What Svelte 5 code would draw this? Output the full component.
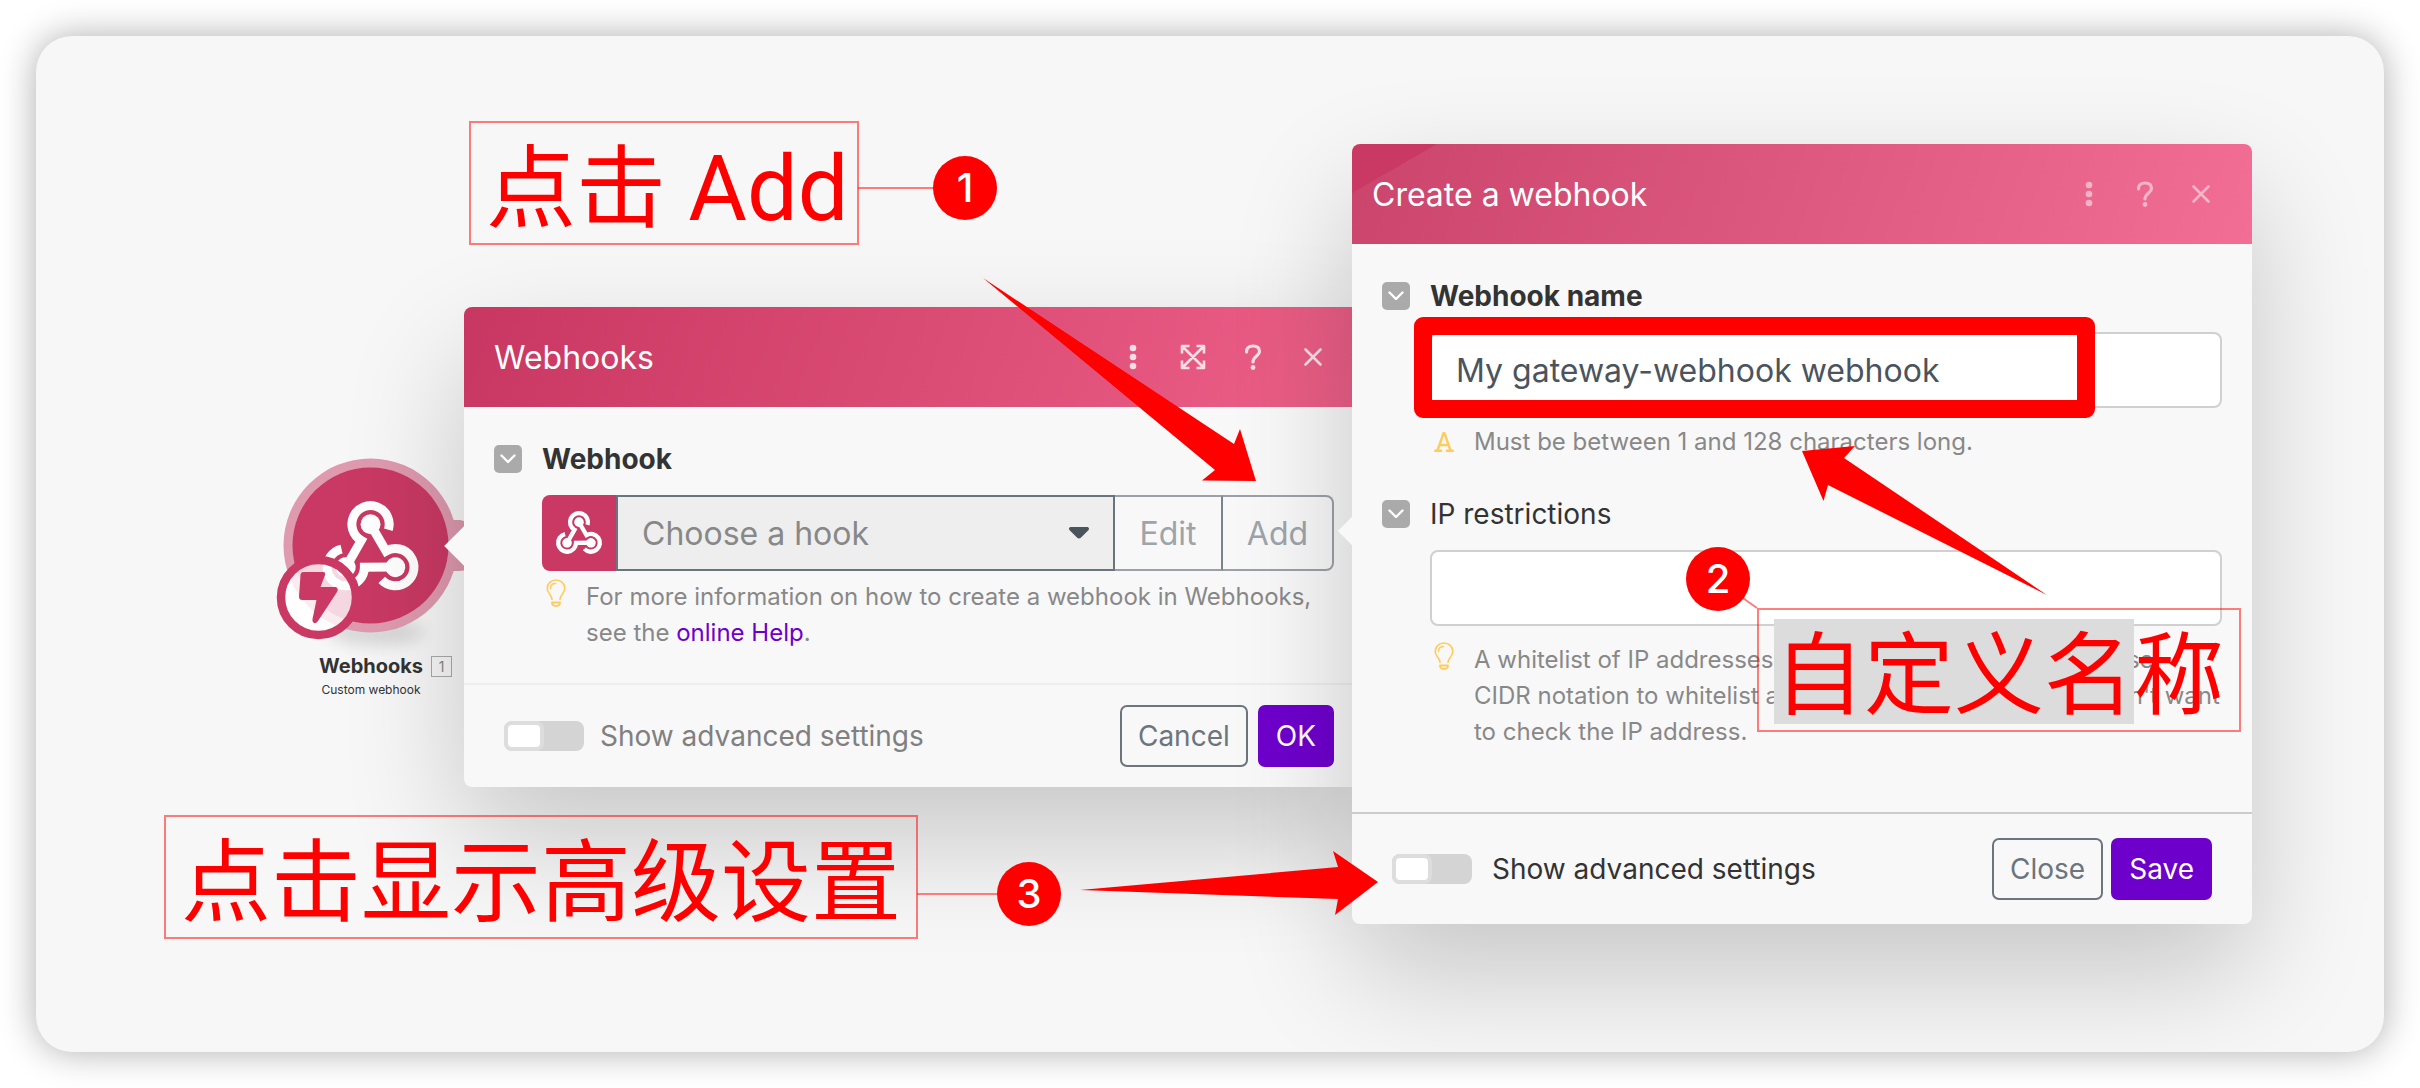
<script lang="ts">
  let hook = $state('');
  let name = $state('My gateway-webhook webhook');
  let ip = $state('');
  let advancedHook = $state(false);
  let advancedCreate = $state(false);
</script>

{#snippet webhookIcon()}
  <svg class="webhook-icon" viewBox="212 207 300 282" aria-hidden="true">
    {#each [0, 120, 240] as turn (turn)}
      <g transform="rotate({turn} 362 369)">
        <path d="M415.5 299.4A56 56 0 1 0 334 331.5L288 412" />
        <circle cx="362" cy="283" r="30" />
      </g>
    {/each}
  </svg>
{/snippet}

{#snippet dots()}
  <svg width="8" height="26" viewBox="0 0 8 26" fill="currentColor" aria-hidden="true">
    <circle cx="4" cy="4" r="3.3" />
    <circle cx="4" cy="13" r="3.3" />
    <circle cx="4" cy="22" r="3.3" />
  </svg>
{/snippet}

{#snippet question()}
  <svg width="18" height="26" viewBox="0 0 18 26" fill="none" aria-hidden="true">
    <path
      d="M2.5 8C2.5 4 5 2 9 2s6.500 2 6.500 5.500C15.500 12 9 12 9 18"
      stroke="currentColor"
      stroke-width="3.2"
      stroke-linecap="round"
    />
    <circle cx="9" cy="23.500" r="2.400" fill="currentColor" />
  </svg>
{/snippet}

{#snippet cross()}
  <svg width="20" height="20" viewBox="0 0 20 20" aria-hidden="true">
    <path d="M2.500 2.500l15 15M17.500 2.500l-15 15" stroke="currentColor" stroke-width="2.600" stroke-linecap="round" />
  </svg>
{/snippet}

{#snippet chevron()}
  <button class="fold" aria-label="Toggle">
    <svg width="16" height="10" viewBox="0 0 16 10" fill="none" aria-hidden="true">
      <path d="M1.500 1.500L8 8l6.500-6.500" stroke="#fff" stroke-width="2.400" stroke-linecap="round" stroke-linejoin="round" />
    </svg>
  </button>
{/snippet}

{#snippet bulb()}
  <svg class="hint-icon" width="20" height="28" viewBox="0 0 20 28" fill="none" stroke="#ffcc5c" aria-hidden="true">
    <path
      d="M6 20.500C6 16 1.200 14.500 1.200 9.500 1.200 4.500 5 1 10 1s8.800 3.500 8.800 8.500c0 5-4.800 6.500-4.800 11"
      stroke-width="1.600"
      stroke-linecap="round"
    />
    <path d="M4.500 9.500C4.500 6.500 6.500 4.400 9.500 4.400" stroke-width="1.500" stroke-linecap="round" />
    <path d="M6 23.500h8c0 2.500-1.500 3.500-4 3.500s-4-1-4-3.500z" stroke-width="1.800" stroke-linejoin="round" />
  </svg>
{/snippet}

<main class="board">
  <section class="node">
    <div class="node-icon">
      <svg width="200" height="190" viewBox="270 450 200 190" aria-hidden="true">
        <ellipse cx="376" cy="632" rx="48" ry="14" fill="#000" opacity="0.120" class="soft" />
        <path d="M448 520h10c5 0 12 2 12 7v38c0 5-7 6-12 6h-10z" fill="#dc98ad" />
        <circle cx="370.500" cy="545.500" r="87" fill="#df9aaf" />
        <circle cx="370.500" cy="545.500" r="78" fill="#c93963" />
        <g class="webhook-icon" transform="translate(250 430) scale(0.333)">
          {#each [0, 120, 240] as turn (turn)}
            <g transform="rotate({turn} 362 369)">
              <path d="M415.500 299.400A56 56 0 1 0 334 331.500L288 412" />
              <circle cx="362" cy="283" r="30" />
            </g>
          {/each}
        </g>
        <circle cx="318.500" cy="597.500" r="37.500" fill="#fff" fill-opacity="0.800" stroke="#c93963" stroke-width="8.500" />
        <path
          d="M304 572h19c2 0 2.500 1 2 3l-4.500 12h14c3 0 4 2 2.500 5l-19 29c-3 4-6 2-5.500-2l4-19h-14c-2.500 0-3.500-1-3.500-3.500l1.500-21c0-2.500 1-3.500 3.500-3.500z"
          fill="#c93963"
        />
      </svg>
    </div>
    <h2>Webhooks <span class="count">1</span></h2>
    <p>Custom webhook</p>
  </section>

  <section class="modal hook-modal">
    <header>
      <h1>Webhooks</h1>
      <button aria-label="More">{@render dots()}</button>
      <button aria-label="Expand">
        <svg width="26" height="26" viewBox="0 0 26 26" fill="none" stroke="currentColor" stroke-width="2.600" aria-hidden="true">
          <path d="M2 9.500V2h7.500M16.500 2H24v7.500M24 16.500V24h-7.500M9.500 24H2v-7.500M3 3l20 20M23 3L3 23" stroke-linejoin="round" />
        </svg>
      </button>
      <button aria-label="Help">{@render question()}</button>
      <button aria-label="Close">{@render cross()}</button>
    </header>
    <div class="body">
      <div class="label-row">
        {@render chevron()}
        <label class="strong" for="hook">Webhook</label>
      </div>
      <div class="hook-field">
        <span class="hook-icon">{@render webhookIcon()}</span>
        <span class="select-box">
          <select id="hook" bind:value={hook}>
            <option value="">Choose a hook</option>
          </select>
          <svg width="20" height="12" viewBox="0 0 20 12" fill="#4b545c" aria-hidden="true">
            <path d="M2 0h16c2 0 2.600 2 1.400 3.200l-7.600 7.600c-1 1-2.600 1-3.600 0L.6 3.200C-.6 2 0 0 2 0z" />
          </svg>
        </span>
        <button class="edit">Edit</button>
        <button class="add">Add</button>
      </div>
      <div class="hint">
        {@render bulb()}
        <p>
          For more information on how to create a webhook in Webhooks, see the
          <a href="#help">online Help</a>.
        </p>
      </div>
    </div>
    <footer>
      <input type="checkbox" id="advanced-hook" bind:checked={advancedHook} />
      <label for="advanced-hook">Show advanced settings</label>
      <button class="outline">Cancel</button>
      <button class="primary">OK</button>
    </footer>
  </section>

  <section class="modal create-modal">
    <header>
      <h1>Create a webhook</h1>
      <button aria-label="More">{@render dots()}</button>
      <button aria-label="Help">{@render question()}</button>
      <button aria-label="Close">{@render cross()}</button>
    </header>
    <div class="body">
      <div class="label-row">
        {@render chevron()}
        <label class="strong" for="name">Webhook name</label>
      </div>
      <input class="text" type="text" id="name" bind:value={name} />
      <div class="hint">
        <svg class="hint-icon letter" width="20" height="20" viewBox="0 0 20 20" fill="none" stroke="#ffcc5c" stroke-width="2.400" stroke-linecap="round" stroke-linejoin="round" aria-hidden="true">
          <path d="M1.200 18.800h6M12.800 18.800h6M3.500 18.500L9.500 1.200h1l6 17.300M6 13h8" />
        </svg>
        <p>Must be between 1 and 128 characters long.</p>
      </div>
      <div class="label-row">
        {@render chevron()}
        <label for="ip">IP restrictions</label>
      </div>
      <input class="text" type="text" id="ip" bind:value={ip} />
      <div class="hint">
        {@render bulb()}
        <p>
          A whitelist of IP addresses divided by commas. You can use<br />
          CIDR notation to whitelist a subnet. Leave empty if you don't want<br />
          to check the IP address.
        </p>
      </div>
    </div>
    <footer>
      <input type="checkbox" id="advanced-create" bind:checked={advancedCreate} />
      <label for="advanced-create">Show advanced settings</label>
      <button class="outline">Close</button>
      <button class="primary">Save</button>
    </footer>
  </section>

  <div class="highlight"></div>
  <svg class="marks" aria-hidden="true">
    <g transform="translate(-36 -36)">
      <path class="link" d="M858 188h76M917 894h80M1740 596l17 12" />
      <path d="M983 278L1234 444L1240 429L1256 481L1202 480.500L1215 470z" />
      <path d="M2047 595L1844 458L1855 446L1802 451L1823.500 501L1828 485z" />
      <path d="M1080 890L1338 867L1333 851L1378 882L1335 915L1338 899z" />
    </g>
  </svg>
  <div class="note note-1">点击 Add</div>
  <div class="note note-2"><mark>自定义名</mark>称</div>
  <div class="note note-3">点击显示高级设置</div>
  <span class="step step-1">1</span>
  <span class="step step-2">2</span>
  <span class="step step-3">3</span>
</main>

<style>
  :global(body) {
    background: #fff;
  }
  .board {
    position: relative;
    box-sizing: border-box;
    margin: 36px;
    min-height: calc(100vh - 72px);
    border-radius: 36px;
    overflow: hidden;
    background: #f7f7f7;
    box-shadow: 0 0 36px rgba(0, 0, 0, 0.32);
    font-family: Inter, 'Liberation Sans', sans-serif;
    color: #333;
  }
  h1,
  h2,
  p {
    margin: 0;
  }
  button,
  input,
  select {
    font: inherit;
    color: inherit;
    margin: 0;
    padding: 0;
    border: 0;
    background: none;
    box-sizing: border-box;
  }

  .webhook-icon path {
    fill: none;
    stroke: #fff;
    stroke-width: 27;
  }
  .webhook-icon circle {
    fill: #fff;
  }

  .node {
    position: absolute;
    left: 235px;
    top: 414px;
    width: 200px;
    text-align: center;
  }
  .node-icon svg {
    display: block;
    margin-left: -1px;
    overflow: visible;
  }
  .soft {
    filter: blur(8px);
  }
  .node h2 {
    position: relative;
    font-size: 20px;
    line-height: 24px;
    margin-top: 14px;
  }
  .node p {
    font-size: 12px;
    line-height: 24px;
  }
  .count {
    position: absolute;
    left: 160px;
    top: 2px;
    width: 19px;
    border: 1px solid #aaa;
    font-size: 14px;
    font-weight: 400;
    line-height: 19px;
    color: #888;
  }

  .modal {
    position: absolute;
    width: 900px;
    border-radius: 8px;
    background: #f8f8f8;
    box-shadow: 0 50px 120px rgba(0, 0, 0, 0.2);
    font-size: 28px;
  }
  .modal::before {
    content: '';
    position: absolute;
    transform: rotate(45deg);
    background: #f8f8f8;
  }
  .hook-modal {
    left: 428px;
    top: 271px;
  }
  .hook-modal::before {
    left: -14px;
    top: 225px;
    width: 28px;
    height: 28px;
  }
  .create-modal {
    left: 1316px;
    top: 108px;
  }
  .create-modal::before {
    left: -10px;
    top: 377px;
    width: 20px;
    height: 20px;
  }

  header {
    display: flex;
    align-items: center;
    gap: 30px;
    height: 100px;
    box-sizing: border-box;
    padding: 0 36px 0 30px;
    border-radius: 8px 8px 0 0;
    background: linear-gradient(110deg, #c83761, #ed6088);
    color: #fff;
  }
  header h1 {
    flex: 1;
    font-size: 32px;
    font-weight: 400;
  }
  header button {
    display: grid;
    place-items: center;
    width: 30px;
    height: 30px;
    opacity: 0.8;
  }
  .create-modal header {
    gap: 26px;
    padding-left: 20px;
    background:
      linear-gradient(150deg, #c93963 42px, transparent 43px),
      linear-gradient(110deg, #ca446b, #f26e95);
  }
  .create-modal header button {
    opacity: 0.5;
  }

  .body {
    padding: 38px 30px 32px;
  }
  .create-modal .body {
    padding-bottom: 62px;
  }
  .label-row {
    display: flex;
    align-items: center;
    gap: 20px;
    height: 28px;
    margin-bottom: 22px;
  }
  .strong {
    font-weight: 700;
  }
  .fold {
    display: grid;
    place-items: center;
    width: 28px;
    height: 28px;
    border-radius: 5px;
    background: #aaa;
  }

  .hook-field {
    display: flex;
    height: 76px;
    margin-left: 48px;
    font-size: 32px;
  }
  .hook-icon {
    display: grid;
    place-items: center;
    width: 74px;
    border-radius: 8px 0 0 8px;
    background: #c93963;
  }
  .hook-icon .webhook-icon {
    width: 48px;
  }
  .select-box {
    flex: 1;
    display: flex;
    position: relative;
  }
  .select-box select {
    flex: 1;
    appearance: none;
    padding: 0 24px;
    border: 2px solid #68747e;
    background: #eee;
    color: #888;
  }
  .select-box svg {
    position: absolute;
    right: 26px;
    top: 32px;
    pointer-events: none;
  }
  .edit,
  .add {
    border: 2px solid #9ba1a7;
    border-left: 0;
    color: #9ea4aa;
  }
  .edit {
    width: 108px;
    border-right-color: #7c848b;
  }
  .add {
    width: 111px;
    border-radius: 0 8px 8px 0;
  }

  .hint {
    display: flex;
    gap: 20px;
    margin: 8px 0 0 52px;
    font-size: 24px;
    line-height: 36px;
    color: #888;
  }
  .create-modal .hint {
    margin: 16px 0 40px 52px;
    white-space: nowrap;
  }
  .create-modal .hint:last-child {
    margin-bottom: 0;
  }
  .hint-icon {
    flex: none;
  }
  .letter {
    margin-top: 8px;
  }
  .hint a {
    color: #6e00cc;
    text-decoration: none;
  }

  .text {
    display: block;
    width: calc(100% - 48px);
    height: 76px;
    margin-left: 48px;
    padding: 0 24px;
    border: 2px solid #d0d0d0;
    border-radius: 8px;
    background: #fff;
    font-size: 32px;
    color: #4b545c;
  }

  footer {
    display: flex;
    align-items: center;
    gap: 10px;
    padding: 20px 30px 20px 40px;
    border-top: 2px solid #eee;
    color: #808080;
  }
  .create-modal footer {
    gap: 8px;
    padding: 24px 40px;
    border-top-color: #ccc;
    color: #333;
  }
  footer input {
    appearance: none;
    width: 80px;
    height: 30px;
    border-radius: 8px;
    background: #d4d4d4;
  }
  footer input::before {
    content: '';
    display: block;
    width: 32px;
    height: 22px;
    border: 4px solid #ddd;
    border-radius: 8px;
    background: #fff;
  }
  footer input:checked::before {
    margin-left: 40px;
  }
  footer label {
    flex: 1;
    margin-left: 6px;
  }
  .create-modal footer label {
    margin-left: 12px;
  }
  footer button {
    height: 62px;
    padding: 0 18px;
    border-radius: 7px;
  }
  footer .outline {
    padding: 0 16px;
    border: 2px solid #6c757d;
    color: #6c757d;
  }
  .primary {
    background: #6e00cc;
    color: #fff;
  }

  .highlight {
    position: absolute;
    left: 1378px;
    top: 281px;
    width: 645px;
    height: 65px;
    border: 18px solid #f00;
    border-radius: 9px;
  }
  .marks {
    position: absolute;
    inset: 0;
    width: 100%;
    height: 100%;
    fill: #f00;
    pointer-events: none;
  }
  .link {
    stroke: #ff7b7b;
    stroke-width: 2;
  }
  .note {
    position: absolute;
    box-sizing: border-box;
    height: 124px;
    padding: 9px 15px 0;
    border: 2px solid rgba(255, 0, 0, 0.5);
    font-family: Roboto, 'Noto Sans CJK SC', sans-serif;
    font-size: 90px;
    line-height: 116px;
    white-space: nowrap;
    color: #f00;
  }
  .note mark {
    display: inline-block;
    background: linear-gradient(#dcdcdc, #dcdcdc) 0 0 / 100% 105px no-repeat;
    color: inherit;
  }
  .note-1 {
    left: 433px;
    top: 85px;
    padding-right: 8px;
  }
  .note-2 {
    left: 1721px;
    top: 572px;
  }
  .note-3 {
    left: 128px;
    top: 779px;
  }
  .step {
    position: absolute;
    width: 64px;
    border-radius: 50%;
    background: #f00;
    color: #fff;
    font-size: 40px;
    font-weight: 500;
    line-height: 64px;
    text-align: center;
  }
  .step-1 {
    left: 897px;
    top: 120px;
  }
  .step-2 {
    left: 1650px;
    top: 511px;
  }
  .step-3 {
    left: 961px;
    top: 826px;
  }
</style>
